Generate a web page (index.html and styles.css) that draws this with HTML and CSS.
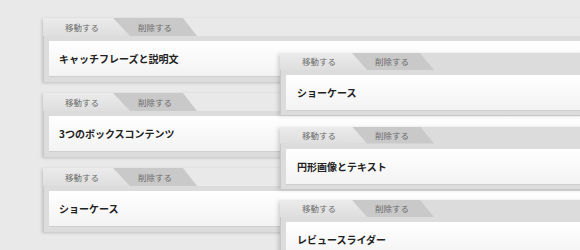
FILE: index.html
```html
<!DOCTYPE html>
<html lang="ja">
<head>
<meta charset="utf-8">
<link rel="stylesheet" href="styles.css">
</head>
<body>
<div class="board">
  <div class="list list-left">
    <div class="card">
      <div class="tabs"><span class="tab tab-move">移動する</span><span class="tab tab-del">削除する</span></div>
      <div class="body">キャッチフレーズと説明文</div>
    </div>
    <div class="card">
      <div class="tabs"><span class="tab tab-move">移動する</span><span class="tab tab-del">削除する</span></div>
      <div class="body">3つのボックスコンテンツ</div>
    </div>
    <div class="card">
      <div class="tabs"><span class="tab tab-move">移動する</span><span class="tab tab-del">削除する</span></div>
      <div class="body">ショーケース</div>
    </div>
  </div>
  <div class="list list-right">
    <div class="card">
      <div class="tabs"><span class="tab tab-move">移動する</span><span class="tab tab-del">削除する</span></div>
      <div class="body">ショーケース</div>
    </div>
    <div class="card">
      <div class="tabs"><span class="tab tab-move">移動する</span><span class="tab tab-del">削除する</span></div>
      <div class="body">円形画像とテキスト</div>
    </div>
    <div class="card">
      <div class="tabs"><span class="tab tab-move">移動する</span><span class="tab tab-del">削除する</span></div>
      <div class="body">レビュースライダー</div>
    </div>
  </div>
</div>
</body>
</html>
```

FILE: styles.css
```css
html, body {
  margin: 0;
  padding: 0;
  background: #e9e9e9;
}
body {
  font-family: "Noto Sans CJK JP", "Noto Sans", sans-serif;
}
.board {
  display: grid;
  grid-template-columns: 43px 237px 1fr;
  padding-top: 18px;
  width: 580px;
  height: 250px;
  box-sizing: border-box;
  overflow: hidden;
}
.list {
  display: flex;
  flex-direction: column;
  gap: 11px;
  grid-row: 1;
  margin-right: -20px;
}
.list-left {
  grid-column: 2 / 4;
}
.list-right {
  grid-column: 3 / 4;
  margin-top: 35px;
  gap: 11.5px;
}
.card {
  background: #dcdcdc;
  height: 64px;
  flex: none;
  box-sizing: border-box;
  padding-left: 5px;
  box-shadow: -1px 1px 3px rgba(0, 0, 0, 0.18);
  border-left: 1px solid #c8c8c8;
  display: flex;
  flex-direction: column;
  background-clip: padding-box;
}
.list-right .card {
  height: 62px;
  box-shadow: -2px 1px 4px rgba(0, 0, 0, 0.16);
}
.tabs {
  display: flex;
  height: 18px;
  flex: none;
  margin-left: -6px;
  background: #e9e9e9;
  margin-bottom: 5px;
}
.list-right .tabs {
  background: transparent;
  height: 17px;
}
.tab {
  height: 100%;
  font-size: 8.5px;
  line-height: 18px;
  color: #6a6a6a;
  box-sizing: border-box;
}
.tab-move {
  position: relative;
  z-index: 1;
  width: 87px;
  padding-left: 22px;
  background: linear-gradient(#ebebeb, #dedede);
  clip-path: polygon(0 0, 70px 0, 87px 100%, 0 100%);
}
.tab-del {
  width: 84px;
  margin-left: -17px;
  padding-left: 25px;
  background: #c9c9c9;
  clip-path: polygon(0 0, 70px 0, 84px 100%, 0 100%);
}
.list-right .tab {
  line-height: 17px;
}
.list-right .tab-move {
  width: 87px;
  clip-path: polygon(0 0, 72px 0, 87px 100%, 0 100%);
}
.body {
  height: 36px;
  flex: none;
  box-sizing: border-box;
  background: linear-gradient(#ffffff, #f3f3f3);
  border-bottom: 1px solid #cfcfcf;
  padding-left: 10px;
  font-size: 10px;
  font-weight: bold;
  color: #222;
  display: flex;
  align-items: center;
}
.list-right .body {
  padding-left: 11px;
}
```
